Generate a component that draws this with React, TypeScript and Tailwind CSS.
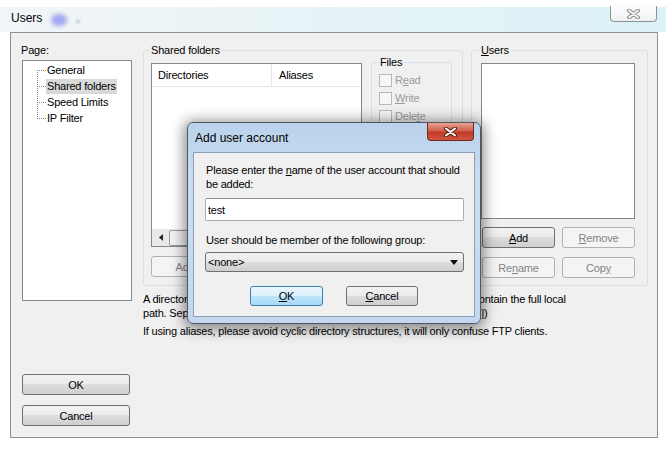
import type { ReactNode } from 'react';

const font = "font-['Liberation_Sans',Arial,sans-serif]";

function Btn({
  children,
  className = '',
  off = false,
  hot = false,
}: {
  children: ReactNode;
  className?: string;
  off?: boolean;
  hot?: boolean;
}) {
  const skin = off
    ? 'border-[#adb2b5] text-[#838383] bg-[#f4f4f4]'
    : hot
      ? 'border-[#3c7fb1] text-black bg-[linear-gradient(#eaf6fd,#d9f0fc_50%,#bee6fd_50%,#a7d9f5)]'
      : 'border-[#707070] text-black bg-[linear-gradient(#f2f2f2,#ebebeb_50%,#dddddd_50%,#cfcfcf)]';
  return (
    <div className={`flex shrink-0 items-center justify-center rounded-[3px] border ${skin} ${className}`}>
      <span>{children}</span>
    </div>
  );
}

function CloseGlyph({ outline, fill }: { outline: string; fill: string }) {
  return (
    <svg width="13" height="10" viewBox="0 0 13 10">
      <path d="M2 1.5 L11 8.5 M11 1.5 L2 8.5" stroke={outline} strokeWidth="4" strokeLinecap="round" />
      <path d="M2 1.5 L11 8.5 M11 1.5 L2 8.5" stroke={fill} strokeWidth="2" strokeLinecap="round" />
    </svg>
  );
}

function Check({ children }: { children: ReactNode }) {
  return (
    <div className="flex h-[18px] items-center gap-[3px] text-[#9a9a9a]">
      <div className="h-[13px] w-[13px] border border-[#b8b8b8] bg-[#f7f7f7]" />
      <span>{children}</span>
    </div>
  );
}

function PageTree() {
  const pages = ['General', 'Shared folders', 'Speed Limits', 'IP Filter'];
  return (
    <div className="ml-[1px] mt-[3px] h-[241px] w-[110px] border border-[#828790] bg-white pt-[1px]">
      <div className="flex">
        <svg width="23" height="64" viewBox="0 0 23 64" className="shrink-0">
          <g stroke="#8a8a8a" strokeWidth="1" strokeDasharray="1 1" shapeRendering="crispEdges">
            <path d="M14.5 8 V56" />
            <path d="M14 8.5 H23 M14 24.5 H23 M14 40.5 H23 M14 56.5 H23" />
          </g>
        </svg>
        <div className="flex flex-col">
          {pages.map((p, i) => (
            <div key={p} className="flex h-[16px] items-center">
              <span className={`px-[1px] leading-[15px] ${i === 1 ? 'bg-[#d9d9d9]' : ''}`}>{p}</span>
            </div>
          ))}
        </div>
      </div>
    </div>
  );
}

function DirList() {
  return (
    <div className="relative mt-[6px] flex h-[184px] w-[211px] flex-col border border-[#828790] bg-white">
      <div className="flex h-[23px] border-b border-[#e5e5e5]">
        <div className="flex w-[120px] items-center border-r border-[#e5e5e5] pl-[6px]">Directories</div>
        <div className="flex items-center pl-[7px]">Aliases</div>
      </div>
      <div className="flex-1" />
      <div className="flex h-[17px] items-center bg-[#e9e9e9]">
        <div className="flex h-[17px] w-[17px] items-center justify-center">
          <svg width="4" height="7" viewBox="0 0 4 7">
            <path d="M4 0 L0 3.5 L4 7 Z" fill="#222" />
          </svg>
        </div>
        <div className="h-[16px] w-[60px] rounded-[2px] border border-[#9a9a9a] bg-[linear-gradient(90deg,#f3f3f3,#e6e6e6)]" />
      </div>
    </div>
  );
}

function AddUserDialog() {
  return (
    <div className="absolute left-[187px] top-[122px] flex h-[202px] w-[294px] flex-col rounded-[6px] border border-[#4d5866] bg-[linear-gradient(#bad2ec,#cbddf1_30%,#c3d8ee)] shadow-[0_2px_14px_3px_rgba(0,0,0,0.45)]">
      <div className="relative flex h-[29px] items-center pl-[7px] text-[12px] tracking-normal">
        Add user account
        <div className="absolute right-[6px] top-0 flex h-[18px] w-[47px] items-center justify-center rounded-b-[4px] border border-t-0 border-[#6e2a20] bg-[linear-gradient(#e9a293,#d2604d_45%,#c13b27_55%,#d0553f)]">
          <CloseGlyph outline="#5a1d14" fill="#ffffff" />
        </div>
      </div>
      <div className="mx-[5px] h-[165px] border border-[#8aa0b8] bg-[#f0f0f0] pl-[11px] pt-[10px]">
        <p className="pl-[1px]">
          Please enter the <u>n</u>ame of the user account that should
          <br />
          be added:
        </p>
        <div className="mt-[7px] flex h-[23px] w-[259px] items-center rounded-[2px] border border-[#abadb3] border-t-[#8e8f8f] bg-white pl-[2px]">
          test
        </div>
        <p className="mt-[12px] pl-[1px]">
          User should be member of the following <u>g</u>roup:
        </p>
        <div className="mt-[5px] flex h-[20px] w-[259px] items-center justify-between rounded-[3px] border border-[#707070] bg-[linear-gradient(#f2f2f2,#ebebeb_50%,#dddddd_50%,#cfcfcf)] pl-[2px] pr-[5px]">
          <span>&lt;none&gt;</span>
          <svg width="8" height="5" viewBox="0 0 8 5">
            <path d="M0 0 H8 L4 5 Z" fill="#111" />
          </svg>
        </div>
        <div className="mt-[14px] flex justify-center gap-[23px] pr-[11px]">
          <Btn hot className="h-[20px] w-[73px]">
            <u>O</u>K
          </Btn>
          <Btn className="h-[20px] w-[72px]">
            <u>C</u>ancel
          </Btn>
        </div>
      </div>
    </div>
  );
}

export default function App() {
  return (
    <div className={`relative h-[451px] w-[666px] overflow-hidden bg-white text-[11px] leading-[14px] tracking-[-0.2px] text-black ${font}`}>
      {/* title bar */}
      <div className="mt-[7px] flex h-[25px] items-start justify-between bg-[linear-gradient(90deg,#f2f5f7,#e8f3f6_40%,#dcf2f8)]">
        <div className="flex items-center pl-[11px] pt-[3px]">
          <span className="text-[12px] tracking-normal">Users</span>
          <div className="ml-[9px] mt-[4px] h-[12px] w-[16px] rounded-full bg-[#a3a9f0] blur-[2px]" />
          <div className="ml-[9px] mt-[7px] h-[3px] w-[4px] rounded-full bg-[#b9c3d6] blur-[1px]" />
        </div>
        <div className="mr-[9px] mt-[-1px] flex h-[16px] w-[47px] items-center justify-center rounded-b-[4px] border border-t-0 border-[#8d9296] bg-[linear-gradient(#fdfdfd,#eef1f3)]">
          <CloseGlyph outline="#8c8c8c" fill="#f4f4f4" />
        </div>
      </div>

      {/* client area */}
      <div className="mx-[10px] flex h-[406px] w-[648px] border border-[#8e8f8f] bg-[#f0f0f0]">
        <div className="flex w-[121px] shrink-0 flex-col pl-[10px] pt-[10px]">
          <span>Page:</span>
          <PageTree />
          <Btn className="ml-[1px] mt-[73px] h-[21px] w-[108px]">OK</Btn>
          <Btn className="ml-[1px] mt-[10px] h-[21px] w-[108px]">Cancel</Btn>
        </div>

        <div className="ml-[11px] flex flex-col pt-[10px]">
          <div className="flex">
            <fieldset className="h-[243px] w-[320px] rounded-[3px] border border-[#d5dfe5]">
              <legend className="ml-[5px] px-[2px]">Shared folders</legend>
              <div className="flex">
                <div className="ml-[7px] flex flex-col">
                  <DirList />
                  <Btn off className="mt-[9px] h-[21px] w-[68px]">
                    Add
                  </Btn>
                </div>
                <fieldset className="ml-[9px] h-[170px] w-[81px] rounded-[3px] border border-[#d5dfe5] pl-[7px]">
                  <legend className="ml-[0px] px-[1px] leading-[10px]">Files</legend>
                  <div className="mt-[4px] flex flex-col">
                    <Check>
                      R<u>e</u>ad
                    </Check>
                    <Check>
                      <u>W</u>rite
                    </Check>
                    <Check>
                      Dele<u>t</u>e
                    </Check>
                  </div>
                </fieldset>
              </div>
            </fieldset>

            <fieldset className="ml-[8px] h-[243px] w-[177px] rounded-[3px] border border-[#d5dfe5]">
              <legend className="ml-[7px] px-[2px]">
                <u>U</u>sers
              </legend>
              <div className="ml-[9px] mt-[6px] h-[156px] w-[154px] border border-[#828790] bg-white" />
              <div className="ml-[10px] mt-[8px] flex gap-[7px]">
                <Btn className="h-[21px] w-[73px]">
                  <u>A</u>dd
                </Btn>
                <Btn off className="h-[21px] w-[73px]">
                  <u>R</u>emove
                </Btn>
              </div>
              <div className="ml-[10px] mt-[9px] flex gap-[7px]">
                <Btn off className="h-[21px] w-[73px]">
                  Re<u>n</u>ame
                </Btn>
                <Btn off className="h-[21px] w-[73px]">
                  Cop<u>y</u>
                </Btn>
              </div>
            </fieldset>
          </div>

          <p className="mt-[6px] whitespace-nowrap">
            A directory alias will also appear at the specified location. Aliases must contain the full local
            <br />
            path. Separate multiple aliases for one directory with the pipe character (|)
          </p>
          <p className="mt-[4px] whitespace-nowrap">
            If using aliases, please avoid cyclic directory structures, it will only confuse FTP clients.
          </p>
        </div>
      </div>

      <AddUserDialog />
    </div>
  );
}
